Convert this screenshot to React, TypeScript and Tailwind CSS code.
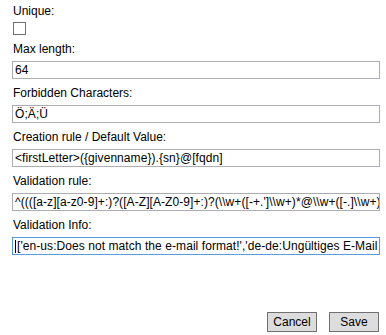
const validationRule = String.raw`^((([a-z][a-z0-9]+:)?([A-Z][A-Z0-9]+:)?(\\w+([-+.']\\w+)*@\\w+([-.]\\w+)*\\.\\w+([-.]\\w+)*))$`;
const validationInfo = `['en-us:Does not match the e-mail format!','de-de:Ungültiges E-Mail Format!']`;

function Label({ text, top }: { text: string; top: string }) {
  return <div className={`pl-[13px] h-[16px] leading-[16px] ${top}`}>{text}</div>;
}

function TextBox({ value, focused }: { value: string; focused?: boolean }) {
  return (
    <div
      className={`ml-[12px] mt-[4px] w-[368px] h-[18px] border overflow-hidden whitespace-nowrap leading-[16px] pl-[2px] flex items-center tracking-[0.07px] ${
        focused ? "border-[#569de5]" : "border-[#abadb3]"
      }`}
    >
      {focused && <span className="shrink-0 w-px h-[13px] bg-black mr-px" />}
      <span>{value}</span>
    </div>
  );
}

export default function App() {
  return (
    <div
      className="w-[386px] h-[335px] bg-white text-black text-[12px] flex flex-col"
      style={{ fontFamily: '"Liberation Sans", Arial, sans-serif' }}
    >
      <Label text="Unique:" top="mt-[3px]" />
      <div className="ml-[13px] mt-[3px] w-[13px] h-[13px] border border-[#707070] bg-white" />

      <Label text="Max length:" top="mt-[6px]" />
      <TextBox value="64" />

      <Label text="Forbidden Characters:" top="mt-[6px]" />
      <TextBox value="Ö;Ä;Ü" />

      <Label text="Creation rule / Default Value:" top="mt-[6px]" />
      <TextBox value="<firstLetter>({givenname}).{sn}@[fqdn]" />

      <Label text="Validation rule:" top="mt-[6px]" />
      <TextBox value={validationRule} />

      <Label text="Validation Info:" top="mt-[6px]" />
      <TextBox value={validationInfo} focused />

      <div className="flex-1" />
      <div className="flex justify-end gap-[12px] pr-[7px] pb-[3px]">
        <button className="w-[50px] h-[20px] border border-[#707070] bg-[#dddddd] leading-[18px]">Cancel</button>
        <button className="w-[50px] h-[20px] border border-[#707070] bg-[#dddddd] leading-[18px]">Save</button>
      </div>
    </div>
  );
}
